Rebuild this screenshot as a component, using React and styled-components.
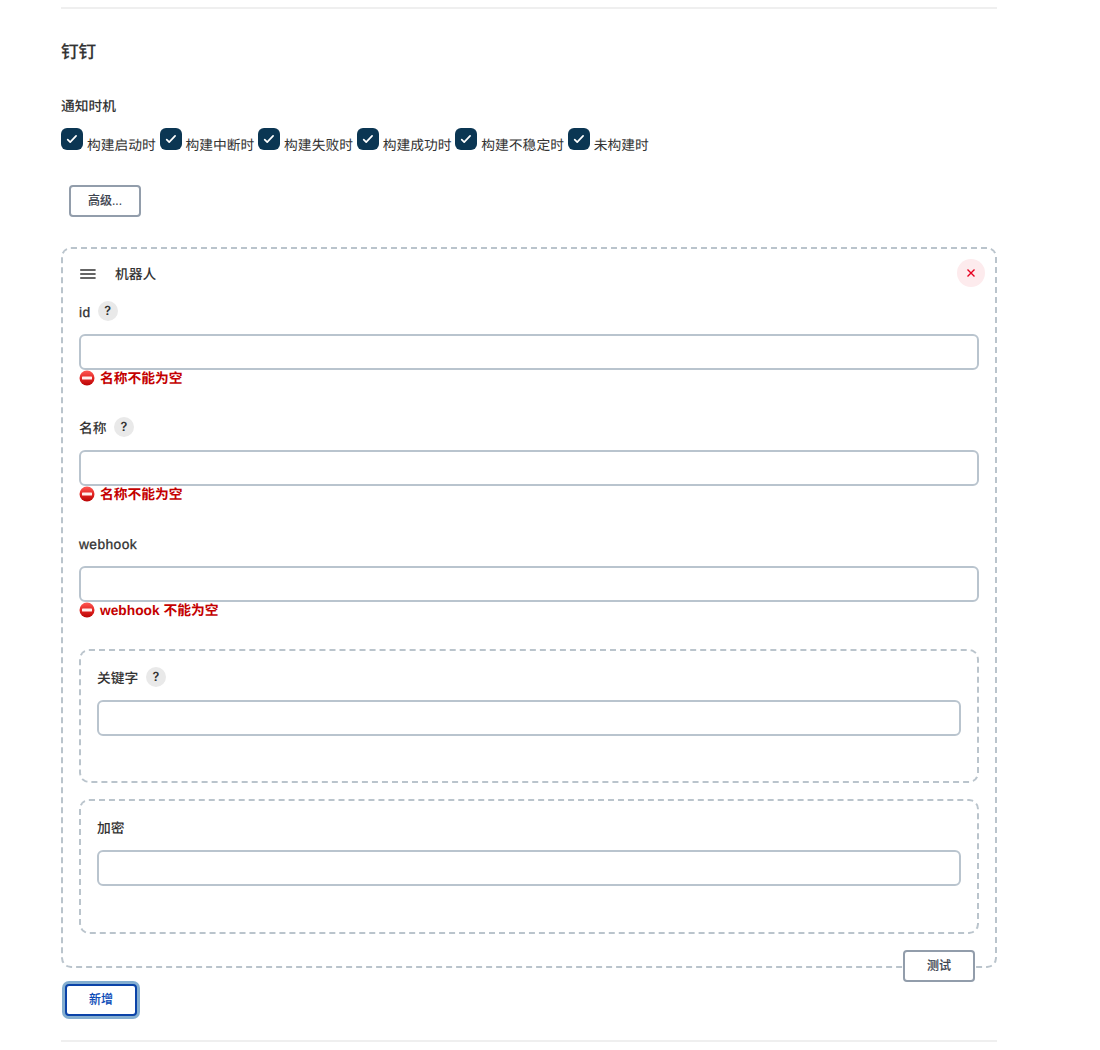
import React from "react";
import styled, { createGlobalStyle } from "styled-components";

const GlobalStyle = createGlobalStyle`
  *, *::before, *::after { box-sizing: border-box; }
  body {
    margin: 0;
    background: #fff;
    color: #333;
    font-family: "Liberation Sans", "Noto Sans CJK SC", sans-serif;
    font-size: 13.77px;
    text-rendering: geometricPrecision;
  }
  button, input { font-family: inherit; }
`;

const Page = styled.main`
  width: 936px;
  height: 1050px;
  margin-left: 61px;
  padding-top: 7px;
  display: flex;
  flex-direction: column;
`;

const Rule = styled.hr`
  flex: none;
  width: 100%;
  height: 2px;
  margin: 0;
  border: 0;
  background: #efefef;
`;

const SectionTitle = styled.h2`
  margin: 30px 0 0;
  height: 26px;
  line-height: 26px;
  font-size: 17.6px;
  font-weight: 500;
  -webkit-text-stroke: 0.15px currentColor;
`;

const GroupLabel = styled.div`
  margin-top: 32px;
  height: 20px;
  line-height: 20px;
  font-weight: 500;
`;

const Options = styled.div`
  display: flex;
  gap: 3.9px;
  height: 30px;
  margin-top: 11px;
`;

const Option = styled.label`
  display: flex;
  gap: 3.9px;
  white-space: nowrap;
`;

const CheckSquare = styled.span`
  flex: none;
  display: grid;
  place-items: center;
  width: 22px;
  height: 22px;
  border-radius: 6px;
  background: #0b3653;
`;

const OptionText = styled.span`
  padding-top: 8px;
  line-height: 20px;
`;

const Button = styled.button`
  flex: none;
  width: 72px;
  height: 32px;
  padding: 0;
  border: 2px solid ${(p) => (p.$primary ? "#0b43a8" : "#929dab")};
  border-radius: 4px;
  background: #fff;
  color: ${(p) => (p.$primary ? "#0b4bb8" : "#3d444f")};
  box-shadow: ${(p) => (p.$primary ? "0 0 0 3px #84aed0" : "none")};
  font-size: 12px;
  font-weight: 500;
  line-height: 20px;
  -webkit-text-stroke: 0.12px currentColor;
`;

const AdvancedRow = styled.div`
  display: flex;
  margin-top: 27px;
  padding-left: 8px;
`;

const RobotPanel = styled.section`
  flex: none;
  height: 721px;
  margin-top: 30px;
  padding: 10px 16px 0;
  border: 2px dashed #bac4cc;
  border-radius: 10px;
  display: flex;
  flex-direction: column;
`;

const PanelHeader = styled.header`
  display: flex;
  align-items: center;
  height: 28px;
  margin-right: -6px;
`;

const PanelTitle = styled.div`
  margin-left: 18px;
  flex: 1;
  line-height: 20px;
  padding-top: 3px;
  font-weight: 500;
`;

const DeleteButton = styled.button`
  display: grid;
  place-items: center;
  width: 28px;
  height: 28px;
  padding: 0;
  border: 0;
  border-radius: 50%;
  background: #fdebed;
`;

const Fields = styled.div`
  flex: none;
  height: 348px;
  margin-top: 14px;
`;

const Field = styled.div`
  flex: none;
  height: ${(p) => p.$height || 116}px;
`;

const FieldLabel = styled.div`
  display: flex;
  align-items: center;
  height: 20px;
  margin-bottom: 13px;
  font-weight: 500;
  letter-spacing: ${(p) => (p.$latin ? "0.42px" : "0")};
  -webkit-text-stroke: ${(p) => (p.$latin ? "0.3px currentColor" : "0")};
`;

const LabelText = styled.span`
  line-height: 20px;
  padding-top: 3px;
`;

const Help = styled.span`
  display: grid;
  place-items: center;
  width: 20px;
  height: 20px;
  padding-top: 1px;
  margin-left: ${(p) => p.$gap || 7}px;
  border-radius: 50%;
  background: #e9e9e9;
  font-family: Inter, sans-serif;
  font-size: 12.5px;
  font-weight: 600;
  line-height: 19px;
  letter-spacing: 0;
  -webkit-text-stroke: 0;
`;

const TextInput = styled.input`
  display: block;
  width: 100%;
  height: 36px;
  padding: 0 8px;
  border: 2px solid #b9c4ce;
  border-radius: 6px;
  background: #fff;
  outline: none;
`;

const ErrorMessage = styled.div`
  display: flex;
  align-items: center;
  gap: 5px;
  height: 16px;
  color: #c40000;
  font-weight: 700;
  line-height: 16px;
`;

const ErrorText = styled.span`
  padding-top: 2px;
`;

const Fieldset = styled.section`
  flex: none;
  height: ${(p) => p.$height}px;
  margin-top: ${(p) => p.$offset || 0}px;
  padding: 16px 16px 0;
  border: 2px dashed #bac4cc;
  border-radius: 10px;
`;

const TestRow = styled.div`
  display: flex;
  justify-content: flex-end;
  margin-top: 16px;
  padding-right: 4px;
`;

const AddRow = styled.div`
  display: flex;
  margin: 16px 0 24px;
  padding-left: 4px;
`;

function Check() {
  return (
    <svg width="12" height="12" viewBox="0 0 12 12" fill="none" stroke="#fff" strokeWidth="1.7" strokeLinecap="round" strokeLinejoin="round">
      <path d="M1.7 6.6 4.2 9.1 10.1 2.8" />
    </svg>
  );
}

function DragHandle() {
  return (
    <svg width="18" height="18" viewBox="0 0 18 18" stroke="#333" strokeWidth="1.45">
      <path d="M1.2 6H16.6M1.2 10H16.6M1.2 14H16.6" />
    </svg>
  );
}

function Cross() {
  return (
    <svg width="10" height="10" viewBox="0 0 10 10" fill="none" stroke="#e6001f" strokeWidth="1.4">
      <path d="M1.5 1.5 8.5 8.5M8.5 1.5 1.5 8.5" />
    </svg>
  );
}

function NoEntry() {
  return (
    <svg width="16" height="16" viewBox="0 0 16 16">
      <defs>
        <linearGradient id="disc" x1="0" y1="0" x2="0" y2="1">
          <stop offset="0" stopColor="#ff5a55" />
          <stop offset="0.5" stopColor="#e32624" />
          <stop offset="1" stopColor="#b90505" />
        </linearGradient>
      </defs>
      <circle cx="8" cy="8" r="7.5" fill="url(#disc)" />
      <rect x="3" y="6.4" width="10" height="3.2" rx="0.7" fill="#fff0ee" />
    </svg>
  );
}

function FormField({ label, help, helpGap, latin, error, height }) {
  return (
    <Field $height={height}>
      <FieldLabel $latin={latin}>
        <LabelText>{label}</LabelText>
        {help && <Help $gap={helpGap}>?</Help>}
      </FieldLabel>
      <TextInput aria-label={label} />
      {error && (
        <ErrorMessage>
          <NoEntry />
          <ErrorText>{error}</ErrorText>
        </ErrorMessage>
      )}
    </Field>
  );
}

const moments = ["构建启动时", "构建中断时", "构建失败时", "构建成功时", "构建不稳定时", "未构建时"];

export default function App() {
  return (
    <>
      <GlobalStyle />
      <Page>
        <Rule />
        <SectionTitle>钉钉</SectionTitle>
        <GroupLabel>通知时机</GroupLabel>
        <Options>
          {moments.map((moment) => (
            <Option key={moment}>
              <CheckSquare><Check /></CheckSquare>
              <OptionText>{moment}</OptionText>
            </Option>
          ))}
        </Options>
        <AdvancedRow><Button>高级...</Button></AdvancedRow>
        <RobotPanel>
          <PanelHeader>
            <DragHandle />
            <PanelTitle>机器人</PanelTitle>
            <DeleteButton aria-label="删除"><Cross /></DeleteButton>
          </PanelHeader>
          <Fields>
            <FormField label="id" latin help helpGap={7.2} error="名称不能为空" />
            <FormField label="名称" help helpGap={7.4} error="名称不能为空" />
            <FormField label="webhook" latin error="webhook 不能为空" />
          </Fields>
          <Fieldset $height={134}>
            <FormField label="关键字" help helpGap={7.6} height={98} />
          </Fieldset>
          <Fieldset $height={135} $offset={16}>
            <FormField label="加密" height={98} />
          </Fieldset>
          <TestRow><Button>测试</Button></TestRow>
        </RobotPanel>
        <AddRow><Button $primary>新增</Button></AddRow>
        <Rule />
      </Page>
    </>
  );
}
